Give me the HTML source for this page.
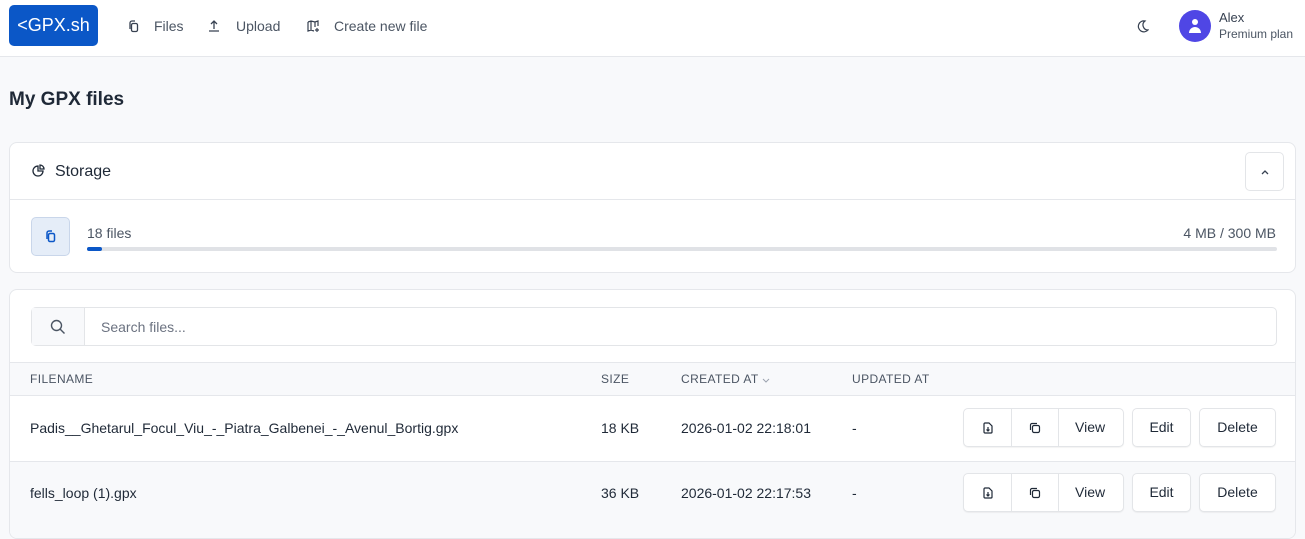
<!DOCTYPE html>
<html><head><meta charset="utf-8"><style>
*{box-sizing:border-box;margin:0;padding:0}
body{width:1305px;height:524px;overflow:hidden;background:#f8f9fb;font-family:"Liberation Sans",sans-serif;color:#1f2937;position:relative}
.hdr{position:absolute;left:0;top:0;width:1305px;height:57px;background:#fff;border-bottom:1px solid #e5e7eb}
.logo{position:absolute;left:9px;top:5px;width:89px;height:41px;background:#0b57c7;border-radius:5px;color:#fff;font-size:18px;line-height:41px;text-align:center}
.nav{position:absolute;top:18px;font-size:14px;color:#4b5563;display:flex;align-items:center;gap:12px}
.ab{position:absolute}
.card{position:absolute;left:9px;width:1287px;background:#fff;border:1px solid #e5e7eb;border-radius:8px}
.btn{position:absolute;height:39px;border:1px solid #e3e5e8;border-radius:5px;background:#fff;box-shadow:0 1px 1px rgba(0,0,0,.05);font-size:14px;text-align:center;line-height:37px;color:#1f2937}
.th{position:absolute;top:372px;font-size:12px;color:#4b5563;letter-spacing:.4px}
.td{position:absolute;font-size:14px;color:#1f2937}
</style></head><body>
<div class="hdr">
<div class="logo">&lt;GPX.sh</div>
<div class="nav" style="left:128px"><svg width="12" height="13" viewBox="0 0 12 13" fill="none" stroke="#374151" stroke-width="1.3"><rect x="3.5" y="3.5" width="6" height="8" rx="1.5"/><path d="M2 9V3a2 2 0 0 1 2-2h3"/></svg><span style="margin-left:2px">Files</span></div>
<div class="nav" style="left:208px"><svg width="12" height="13" viewBox="0 0 12 13" fill="none" stroke="#374151" stroke-width="1.3"><path d="M6 9V1M3 4l3-3 3 3M1 11h10"/></svg><span style="margin-left:4px">Upload</span></div>
<div class="nav" style="left:307px"><svg width="13" height="13" viewBox="0 0 13 13" fill="none" stroke="#374151" stroke-width="1.2"><path d="M1 2l3-1 4 1 3-1v5M1 2v9l3-1 3 1M4 1v9M8 2v5M10 8v4M8 10h4"/></svg><span style="margin-left:2px">Create new file</span></div>
<svg class="ab" style="left:1137px;top:20px" width="12" height="13" viewBox="0 0 12 13" fill="none" stroke="#374151" stroke-width="1.2"><path d="M8 1a5.5 5.5 0 1 0 3 9A5 5 0 0 1 8 1z"/></svg>
<div class="ab" style="left:1179px;top:10px;width:32px;height:32px;border-radius:50%;background:#4f46e5"><div class="ab" style="left:13px;top:9px;width:6px;height:6px;border-radius:50%;background:#fff"></div><div class="ab" style="left:10px;top:17px;width:12px;height:6px;border-radius:6px 6px 0 0;background:#fff"></div></div>
<div class="ab" style="left:1219px;top:10px;font-size:13px;color:#374151">Alex</div>
<div class="ab" style="left:1219px;top:27px;font-size:12px;color:#4b5563">Premium plan</div>
</div>
<div class="ab" style="left:9px;top:89px;font-size:19px;font-weight:600;color:#1f2937">My GPX files</div>

<div class="card" style="top:142px;height:131px">
<div class="ab" style="left:0;top:56px;width:100%;border-top:1px solid #e5e7eb"></div>
<svg class="ab" style="left:22px;top:21px" width="13" height="13" viewBox="0 0 13 13" fill="none" stroke="#1f2937" stroke-width="1.3"><path d="M6 2a5 5 0 1 0 5 5H6z"/><path d="M8 1v4h4a4 4 0 0 0-4-4z"/></svg>
<div class="ab" style="left:45px;top:20px;font-size:16px">Storage</div>
<div class="ab" style="left:1235px;top:9px;width:39px;height:39px;border:1px solid #e3e5e8;border-radius:5px"><svg class="ab" style="left:14px;top:16px" width="10" height="6" viewBox="0 0 10 6" fill="none" stroke="#374151" stroke-width="1.3"><path d="M2 5l3-3 3 3"/></svg></div>
<div class="ab" style="left:21px;top:74px;width:39px;height:39px;background:#e5edf8;border:1px solid #c9d6ea;border-radius:5px"><svg class="ab" style="left:13px;top:12px" width="12" height="13" viewBox="0 0 12 13" fill="none" stroke="#0b57c7" stroke-width="1.5"><rect x="3.5" y="3.5" width="6" height="8" rx="1.5"/><path d="M2 9V3a2 2 0 0 1 2-2h3"/></svg></div>
<div class="ab" style="left:77px;top:82px;font-size:14px;color:#4b5563">18 files</div>
<div class="ab" style="right:19px;top:82px;font-size:14px;color:#4b5563">4 MB / 300 MB</div>
<div class="ab" style="left:77px;top:104px;width:1190px;height:4px;background:#e0e2e6;border-radius:2px"><div style="width:15px;height:4px;background:#0b57c7;border-radius:2px"></div></div>
</div>

<div class="card" style="top:289px;height:250px;overflow:hidden">
<div class="ab" style="left:21px;top:17px;width:1246px;height:39px;border:1px solid #e3e5e8;border-radius:5px"><div class="ab" style="left:0;top:0;width:53px;height:37px;background:#f8f9fb;border-right:1px solid #e3e5e8"></div><svg class="ab" style="left:18px;top:11px" width="16" height="16" viewBox="0 0 16 16" fill="none" stroke="#4b5563" stroke-width="1.4"><circle cx="6.5" cy="6.5" r="5"/><path d="M10 10l4.5 4.5"/></svg><div class="ab" style="left:69px;top:11px;font-size:14px;color:#6b7280">Search files...</div></div>
<div class="ab" style="left:0;top:72px;width:100%;height:34px;background:#f8f9fb;border-top:1px solid #e5e7eb;border-bottom:1px solid #e5e7eb"></div>
<div class="ab" style="left:0;top:171px;width:100%;height:80px;background:#f8f9fb;border-top:1px solid #e5e7eb"></div>
</div>
<div class="th" style="left:30px">FILENAME</div><div class="th" style="left:601px">SIZE</div><div class="th" style="left:681px">CREATED AT <svg width="8" height="5" viewBox="0 0 8 5" fill="none" stroke="#9ca3af" stroke-width="1"><path d="M1 1l3 3 3-3"/></svg></div><div class="th" style="left:852px">UPDATED AT</div>

<div class="td" style="left:30px;top:420px">Padis__Ghetarul_Focul_Viu_-_Piatra_Galbenei_-_Avenul_Bortig.gpx</div>
<div class="td" style="left:601px;top:420px">18 KB</div><div class="td" style="left:681px;top:420px">2026-01-02 22:18:01</div><div class="td" style="left:852px;top:420px">-</div>
<div class="td" style="left:30px;top:485px">fells_loop (1).gpx</div>
<div class="td" style="left:601px;top:485px">36 KB</div><div class="td" style="left:681px;top:485px">2026-01-02 22:17:53</div><div class="td" style="left:852px;top:485px">-</div>

<div class="btn" style="left:963px;top:408px;width:161px"><div class="ab" style="left:47px;top:0;height:37px;border-left:1px solid #e3e5e8"></div><div class="ab" style="left:94px;top:0;height:37px;border-left:1px solid #e3e5e8"></div><svg class="ab" style="left:19px;top:13px" width="10" height="12" viewBox="0 0 10 12" fill="none" stroke="#1f2937" stroke-width="1.2"><path d="M1 2a1 1 0 0 1 1-1h4l3 3v6a1 1 0 0 1-1 1H2a1 1 0 0 1-1-1z"/><path d="M5 5v4M3.5 7.5L5 9l1.5-1.5"/></svg><svg class="ab" style="left:65px;top:13px" width="12" height="12" viewBox="0 0 12 12" fill="none" stroke="#1f2937" stroke-width="1.2"><rect x="3.5" y="3.5" width="7" height="7" rx="1.5"/><path d="M1.5 8V3a1.5 1.5 0 0 1 1.5-1.5h5"/></svg><span class="ab" style="left:111px">View</span></div>
<div class="btn" style="left:1132px;top:408px;width:59px">Edit</div>
<div class="btn" style="left:1199px;top:408px;width:77px">Delete</div>
<div class="btn" style="left:963px;top:473px;width:161px"><div class="ab" style="left:47px;top:0;height:37px;border-left:1px solid #e3e5e8"></div><div class="ab" style="left:94px;top:0;height:37px;border-left:1px solid #e3e5e8"></div><svg class="ab" style="left:19px;top:13px" width="10" height="12" viewBox="0 0 10 12" fill="none" stroke="#1f2937" stroke-width="1.2"><path d="M1 2a1 1 0 0 1 1-1h4l3 3v6a1 1 0 0 1-1 1H2a1 1 0 0 1-1-1z"/><path d="M5 5v4M3.5 7.5L5 9l1.5-1.5"/></svg><svg class="ab" style="left:65px;top:13px" width="12" height="12" viewBox="0 0 12 12" fill="none" stroke="#1f2937" stroke-width="1.2"><rect x="3.5" y="3.5" width="7" height="7" rx="1.5"/><path d="M1.5 8V3a1.5 1.5 0 0 1 1.5-1.5h5"/></svg><span class="ab" style="left:111px">View</span></div>
<div class="btn" style="left:1132px;top:473px;width:59px">Edit</div>
<div class="btn" style="left:1199px;top:473px;width:77px">Delete</div>
</body></html>
